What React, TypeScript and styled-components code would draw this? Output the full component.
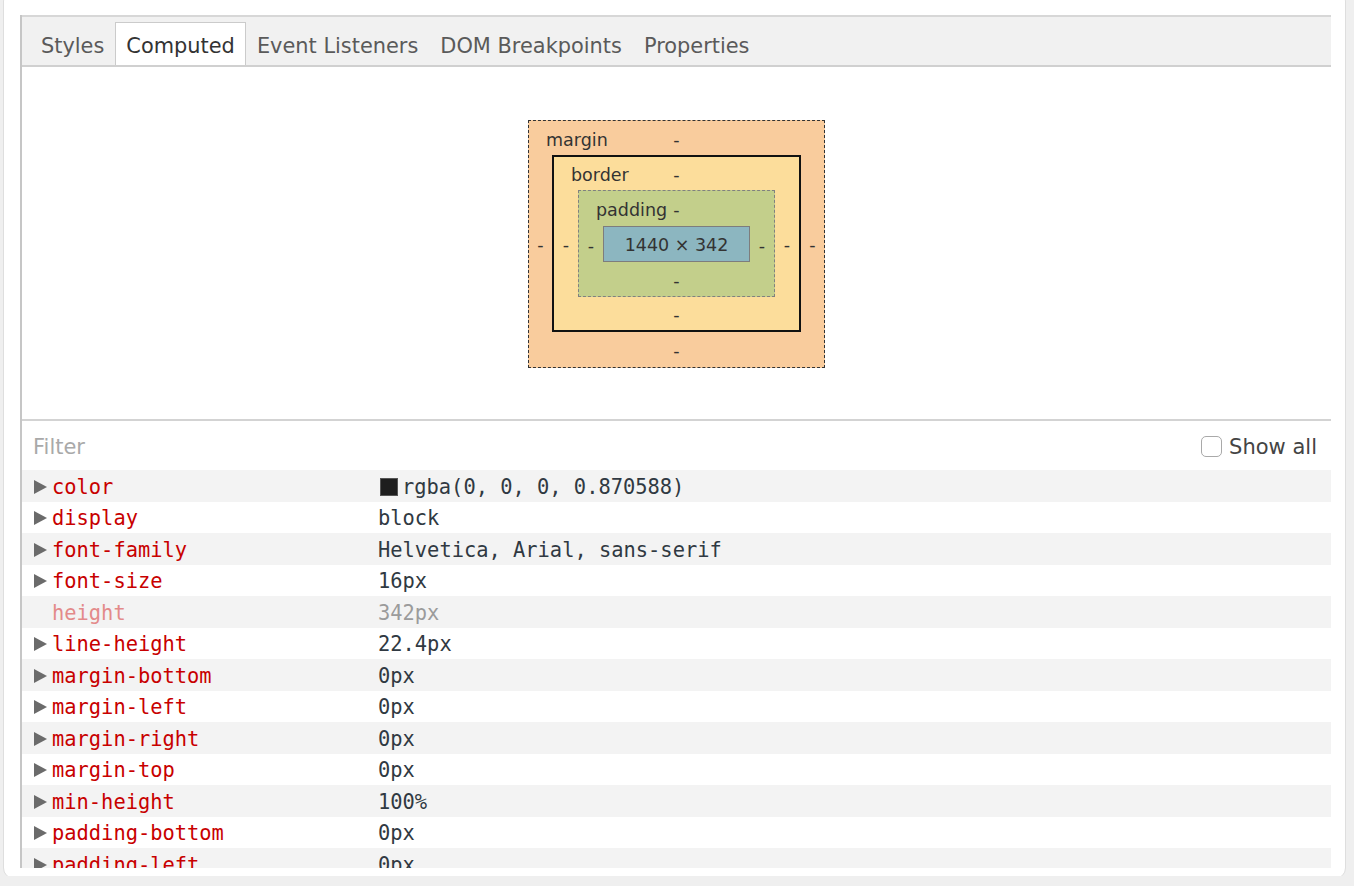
import React from 'react'
import styled, { createGlobalStyle } from 'styled-components'

const GlobalStyle = createGlobalStyle`
  html, body {
    margin: 0;
    padding: 0;
    background: #efefef;
    overflow: hidden;
  }
  #root {
    height: 886px;
  }
`

const Card = styled.div`
  box-sizing: border-box;
  margin: -10px 0 0 3px;
  width: 1343px;
  height: 889px;
  padding: 24px 14px 10px 16px;
  background: #fff;
  border: 1px solid #dedede;
  border-radius: 11px;
`

const Panel = styled.div`
  display: flex;
  flex-direction: column;
  height: 853px;
  border-left: 2px solid #c6c6c6;
  overflow: hidden;
  font-family: 'DejaVu Sans', 'Liberation Sans', sans-serif;
`

const TabBar = styled.div`
  box-sizing: border-box;
  display: flex;
  align-items: flex-end;
  flex: none;
  height: 52px;
  padding-left: 8px;
  background: #f1f1f1;
  border-top: 2px solid #d7d7d7;
  border-bottom: 2px solid #d0d0d0;
`

const Tab = styled.div<{ $active?: boolean }>`
  box-sizing: border-box;
  display: flex;
  align-items: center;
  height: 43px;
  padding: 3px 10px 0;
  font-size: 20.9px;
  color: ${(p) => (p.$active ? '#333' : '#5a5a5a')};
  background: ${(p) => (p.$active ? '#fff' : 'transparent')};
  border: 1px solid ${(p) => (p.$active ? '#cbcbcb' : 'transparent')};
  border-bottom: none;
`

const BoxSection = styled.div`
  flex: none;
  height: 352px;
  display: flex;
  align-items: center;
  justify-content: center;
  padding-top: 2px;
  box-sizing: border-box;
`

const Layer = styled.div<{ $bg: string; $border: string; $side: number; $top: number; $bottom: number }>`
  display: grid;
  grid-template-columns: ${(p) => p.$side}px auto ${(p) => p.$side}px;
  grid-template-rows: ${(p) => p.$top}px auto ${(p) => p.$bottom}px;
  background: ${(p) => p.$bg};
  border: ${(p) => p.$border};
  font-size: 17.5px;
  color: #333;
`

const TopRow = styled.div`
  grid-column: 1 / -1;
  display: grid;
  grid-template-columns: 1fr auto 1fr;
  align-items: stretch;
`

const Dash = styled.span`
  display: flex;
  align-items: center;
  justify-content: center;
  padding-top: 3px;
`

const Label = styled(Dash)`
  justify-self: start;
  padding-left: 17px;
`

const BottomRow = styled(Dash)`
  grid-column: 1 / -1;
`

const Content = styled.div`
  box-sizing: border-box;
  width: 147px;
  height: 36px;
  display: flex;
  align-items: center;
  justify-content: center;
  padding-top: 2px;
  background: #8cb6c0;
  border: 1px solid #7d7d7d;
  color: #333;
`

const FilterBar = styled.div`
  box-sizing: border-box;
  flex: none;
  height: 51px;
  display: flex;
  align-items: center;
  justify-content: space-between;
  padding: 2px 14px 0 11px;
  border-top: 2px solid #d3d3d3;
  font-size: 21px;
`

const FilterText = styled.span`
  color: #a9a9a9;
`

const ShowAll = styled.label`
  display: flex;
  align-items: center;
  gap: 7px;
  color: #444;
`

const Checkbox = styled.span`
  box-sizing: border-box;
  width: 21px;
  height: 21px;
  border: 1px solid #a9a9a9;
  border-radius: 5px;
  background: #fff;
`

const Row = styled.div<{ $shade: boolean }>`
  box-sizing: border-box;
  flex: none;
  height: 31.5px;
  padding-top: 2px;
  display: flex;
  align-items: center;
  background: ${(p) => (p.$shade ? '#f3f3f3' : '#fff')};
  font-family: 'DejaVu Sans Mono', 'Liberation Mono', monospace;
  font-size: 20.4px;
`

const NameCell = styled.div<{ $dim: boolean }>`
  width: 344px;
  flex: none;
  display: flex;
  align-items: center;
  padding-left: 12px;
  color: ${(p) => (p.$dim ? '#e38a8a' : '#c80000')};
`

const Arrow = styled.svg<{ $hidden: boolean }>`
  width: 13px;
  height: 14px;
  margin-right: 5px;
  visibility: ${(p) => (p.$hidden ? 'hidden' : 'visible')};
`

const ValueCell = styled.div<{ $dim: boolean }>`
  display: flex;
  align-items: center;
  gap: 4px;
  color: ${(p) => (p.$dim ? '#9b9b9b' : '#303942')};
`

const Swatch = styled.span`
  width: 18px;
  height: 18px;
  background: #1e1e1e;
  border: 1px solid #555;
  box-sizing: border-box;
  margin-left: 2px;
`

const tabs = ['Styles', 'Computed', 'Event Listeners', 'DOM Breakpoints', 'Properties']

const rows = [
  { name: 'color', value: 'rgba(0, 0, 0, 0.870588)', swatch: true },
  { name: 'display', value: 'block' },
  { name: 'font-family', value: 'Helvetica, Arial, sans-serif' },
  { name: 'font-size', value: '16px' },
  { name: 'height', value: '342px', dim: true },
  { name: 'line-height', value: '22.4px' },
  { name: 'margin-bottom', value: '0px' },
  { name: 'margin-left', value: '0px' },
  { name: 'margin-right', value: '0px' },
  { name: 'margin-top', value: '0px' },
  { name: 'min-height', value: '100%' },
  { name: 'padding-bottom', value: '0px' },
  { name: 'padding-left', value: '0px' },
]

const BoxModel: React.FC = () => (
  <Layer $bg="#f9cc9d" $border="1px dashed #333" $side={23} $top={34} $bottom={35}>
    <TopRow>
      <Label>margin</Label>
      <Dash>-</Dash>
    </TopRow>
    <Dash>-</Dash>
    <Layer $bg="#fcdd9b" $border="2px solid #111" $side={24} $top={33} $bottom={33}>
      <TopRow>
        <Label>border</Label>
        <Dash>-</Dash>
      </TopRow>
      <Dash>-</Dash>
      <Layer $bg="#c3cf8b" $border="1px dashed #808080" $side={24} $top={35} $bottom={34}>
        <TopRow>
          <Label>padding</Label>
          <Dash>-</Dash>
        </TopRow>
        <Dash>-</Dash>
        <Content>1440 × 342</Content>
        <Dash>-</Dash>
        <BottomRow>-</BottomRow>
      </Layer>
      <Dash>-</Dash>
      <BottomRow>-</BottomRow>
    </Layer>
    <Dash>-</Dash>
    <BottomRow>-</BottomRow>
  </Layer>
)

const App: React.FC = () => {
  return (
    <>
      <GlobalStyle />
      <Card>
        <Panel>
          <TabBar>
            {tabs.map((t) => (
              <Tab key={t} $active={t === 'Computed'}>
                {t}
              </Tab>
            ))}
          </TabBar>
          <BoxSection>
            <BoxModel />
          </BoxSection>
          <FilterBar>
            <FilterText>Filter</FilterText>
            <ShowAll>
              <Checkbox />
              Show all
            </ShowAll>
          </FilterBar>
          {rows.map((r, i) => (
            <Row key={r.name} $shade={i % 2 === 0}>
              <NameCell $dim={!!r.dim}>
                <Arrow $hidden={!!r.dim} viewBox="0 0 13 14">
                  <polygon points="0,0 13,7 0,14" fill="#6b6b6b" />
                </Arrow>
                {r.name}
              </NameCell>
              <ValueCell $dim={!!r.dim}>
                {r.swatch && <Swatch />}
                {r.value}
              </ValueCell>
            </Row>
          ))}
        </Panel>
      </Card>
    </>
  )
}

export default App
